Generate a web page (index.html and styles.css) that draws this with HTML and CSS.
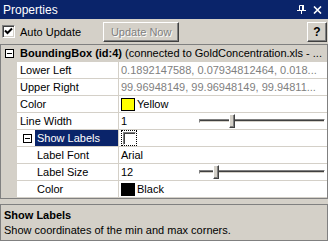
FILE: index.html
```html
<!DOCTYPE html>
<html lang="en">
<head>
  <meta charset="UTF-8">
  <title>Properties</title>
  <link rel="stylesheet" href="styles.css">
</head>
<body>
  <div class="panel">
    <div class="titlebar">
      <span class="title">Properties</span>
      <svg class="pin" width="9" height="9" viewBox="0 0 9 9">
        <path d="M2.5 0.5h3v5h-3z" fill="none" stroke="#fff"/>
        <rect x="5" y="0" width="2" height="6" fill="#fff"/>
        <rect x="0" y="5" width="9" height="1" fill="#fff"/>
        <rect x="4" y="6" width="1" height="3" fill="#fff"/>
      </svg>
      <svg class="close" width="9" height="8" viewBox="0 0 9 8">
        <path d="M1 0.5l7 7M8 0.5l-7 7" stroke="#fff" stroke-width="1.6"/>
      </svg>
    </div>

    <div class="toolbar">
      <span class="check">
        <svg width="9" height="9" viewBox="0 0 9 9"><path d="M1 3.5l2.5 2.5 4.5-4.5" fill="none" stroke="#000" stroke-width="2"/></svg>
      </span>
      <span class="check-label">Auto Update</span>
      <button class="btn btn-update" disabled>Update Now</button>
      <span class="spacer"></span>
      <button class="btn btn-help">?</button>
    </div>

    <div class="grid">
      <div class="cat">
        <span class="exp"></span>
        <span><b>BoundingBox (id:4)</b> (connected to GoldConcentration.xls - ...</span>
      </div>
      <div class="row">
        <div class="gut"></div>
        <div class="name">Lower Left</div>
        <div class="val ro">0.1892147588, 0.07934812464, 0.018...</div>
      </div>
      <div class="row">
        <div class="gut"></div>
        <div class="name">Upper Right</div>
        <div class="val ro">99.96948149, 99.96948149, 99.94811...</div>
      </div>
      <div class="row">
        <div class="gut"></div>
        <div class="name">Color</div>
        <div class="val"><span class="swatch yellow"></span>Yellow</div>
      </div>
      <div class="row">
        <div class="gut"></div>
        <div class="name">Line Width</div>
        <div class="val">
          <span class="num">1</span>
          <span class="slider"><span class="thumb" style="left: 29px;"></span></span>
        </div>
      </div>
      <div class="row">
        <div class="gut"></div>
        <div class="name sub-parent">
          <span class="exp"></span>
          <span class="selected">Show Labels</span>
        </div>
        <div class="val"><span class="focus"><span class="box"></span></span></div>
      </div>
      <div class="row">
        <div class="gut"></div>
        <div class="name child">Label Font</div>
        <div class="val">Arial</div>
      </div>
      <div class="row">
        <div class="gut"></div>
        <div class="name child">Label Size</div>
        <div class="val">
          <span class="num">12</span>
          <span class="slider"><span class="thumb" style="left: 13px;"></span></span>
        </div>
      </div>
      <div class="row">
        <div class="gut"></div>
        <div class="name child">Color</div>
        <div class="val"><span class="swatch black"></span>Black</div>
      </div>
    </div>

    <div class="desc">
      <div class="desc-title">Show Labels</div>
      <div>Show coordinates of the min and max corners.</div>
    </div>
  </div>
</body>
</html>
```

FILE: styles.css
```css
* {
  box-sizing: border-box;
}
body {
  margin: 0;
  background: #d4d0c8;
  font-family: 'Liberation Sans', Arial, sans-serif;
  font-size: 11px;
  color: #000;
}
.panel {
  width: 328px;
  height: 241px;
  display: flex;
  flex-direction: column;
  overflow: hidden;
  background: #d4d0c8;
}
.titlebar {
  height: 19px;
  background: #0a246a;
  color: #fff;
  display: flex;
  align-items: center;
  padding: 0 6px 0 3px;
}
.title {
  font-size: 12px;
  flex: 1;
}
.pin {
  margin-right: 7px;
}
.toolbar {
  height: 25px;
  display: flex;
  align-items: center;
  padding-left: 2px;
  padding-right: 1px;
}
.check {
  width: 13px;
  height: 13px;
  background: #fff;
  border-top: 1px solid #808080;
  border-left: 1px solid #808080;
  border-right: 1px solid #fff;
  border-bottom: 1px solid #fff;
  box-shadow: inset 1px 1px 0 #404040, inset -1px -1px 0 #d4d0c8;
  display: flex;
  align-items: center;
  justify-content: center;
}
.check svg {
  display: block;
}
.check-label {
  margin-left: 5px;
}
.btn {
  height: 20px;
  font-family: inherit;
  font-size: 11px;
  background: #d4d0c8;
  border: 1px solid;
  border-color: #fff #404040 #404040 #fff;
  box-shadow: inset -1px -1px 0 #808080;
  padding: 0;
}
.btn-update {
  width: 76px;
  margin-left: 22px;
  color: #808080;
  text-shadow: 1px 1px 0 #fff;
}
.btn-help {
  width: 20px;
  font-weight: bold;
  font-size: 12px;
  color: #000;
}
.spacer {
  flex: 1;
}
.grid {
  height: 155px;
  border: 1px solid #808080;
  background: #fff;
}
.cat, .row {
  height: 17px;
  line-height: 16px;
  border-bottom: 1px solid #d4d0c8;
  display: flex;
  white-space: nowrap;
  overflow: hidden;
}
.cat {
  background: #d4d0c8;
  align-items: center;
  padding-left: 4px;
}
.cat .exp {
  margin-right: 6px;
}
.exp {
  width: 9px;
  height: 9px;
  border: 1px solid #000;
  background: #fff;
  position: relative;
  flex: none;
}
.exp::after {
  content: "";
  position: absolute;
  left: 1px;
  top: 3px;
  width: 5px;
  height: 1px;
  background: #000;
}
.gut {
  width: 16px;
  background: #d4d0c8;
  flex: none;
}
.name {
  width: 102px;
  flex: none;
  padding-left: 3px;
  border-right: 1px solid #d4d0c8;
}
.name.child {
  padding-left: 20px;
}
.name.sub-parent {
  padding-left: 6px;
  display: flex;
  align-items: center;
}
.selected {
  margin-left: 3px;
  align-self: stretch;
  flex: 1;
  background: #0a246a;
  color: #fff;
  padding-left: 2px;
}
.val {
  flex: 1;
  padding-left: 2px;
  display: flex;
  align-items: center;
  overflow: hidden;
}
.val.ro {
  color: #808080;
}
.num {
  flex: 1;
}
.swatch {
  width: 14px;
  height: 13px;
  border: 1px solid #000;
  margin-right: 2px;
  flex: none;
}
.yellow {
  background: #ffff00;
}
.black {
  background: #000;
}
.slider {
  position: relative;
  width: 126px;
  height: 4px;
  margin-right: 2px;
  background: #d4d0c8;
  border-top: 1px solid #808080;
  border-left: 1px solid #808080;
  border-right: 1px solid #fff;
  border-bottom: 1px solid #fff;
  box-shadow: inset 0 1px 0 #404040;
}
.thumb {
  position: absolute;
  top: -6px;
  width: 6px;
  height: 14px;
  background: #d4d0c8;
  border-top: 1px solid #fff;
  border-left: 1px solid #fff;
  border-right: 1px solid #404040;
  border-bottom: 1px solid #404040;
  box-shadow: inset -1px -1px 0 #808080;
}
.focus {
  width: 16px;
  height: 16px;
  border: 1px dotted #000;
  display: flex;
  align-items: center;
  justify-content: center;
}
.box {
  width: 13px;
  height: 13px;
  background: #fff;
  border-top: 1px solid #808080;
  border-left: 1px solid #808080;
  border-right: 1px solid #fff;
  border-bottom: 1px solid #fff;
  box-shadow: inset 1px 1px 0 #404040;
}
.desc {
  margin-top: 5px;
  height: 37px;
  border: 1px solid #808080;
  padding: 3px 3px 0;
  line-height: 15px;
}
.desc-title {
  font-weight: bold;
}
```
